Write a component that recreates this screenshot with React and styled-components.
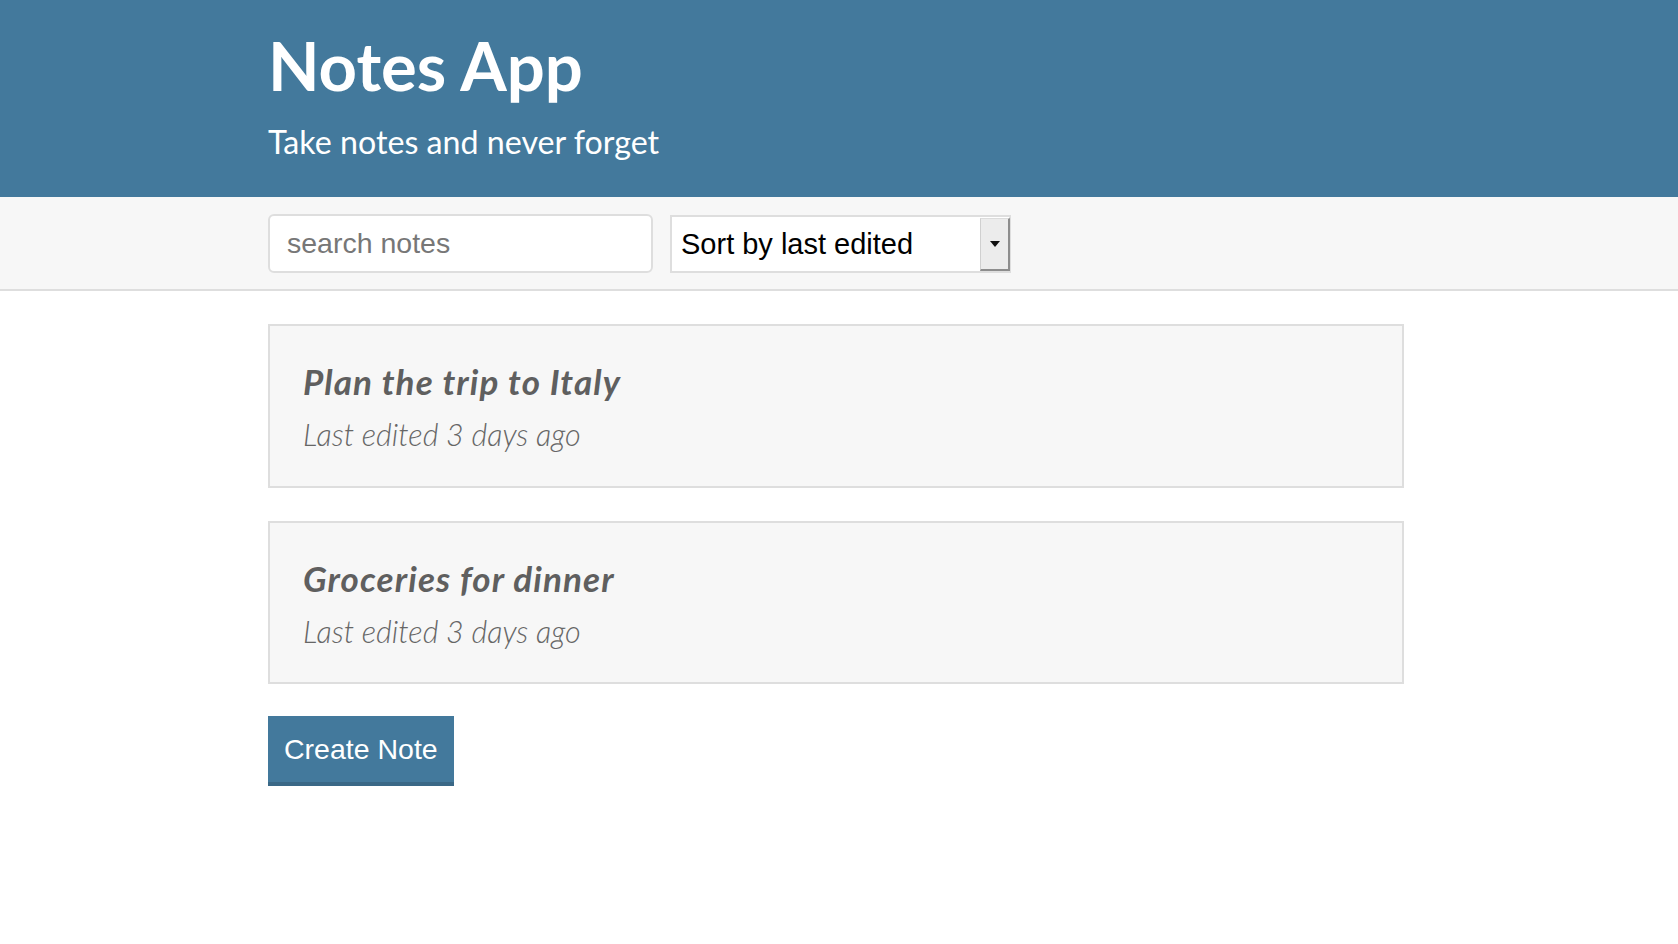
import React from 'react';
import styled, { createGlobalStyle } from 'styled-components';

const GlobalStyle = createGlobalStyle`
  * {
    box-sizing: border-box;
  }
  body {
    margin: 0;
    background: #fff;
    font-family: Lato, "Open Sans", sans-serif;
    color: #333;
  }
`;

const Container = styled.div`
  max-width: 1142px;
  margin: 0 auto;
  padding-right: 6px;
`;

const Header = styled.header`
  background: #43799c;
  color: #fff;
  padding: 32px 0 39px;
`;

const Title = styled.h1`
  margin: 0;
  font-size: 67px;
  line-height: 1;
  font-weight: 700;
`;

const Subtitle = styled.h2`
  margin: 27px 0 0;
  font-size: 32.2px;
  line-height: 1;
  font-weight: 400;
`;

const ActionsBar = styled.div`
  background: #f7f7f7;
  border-bottom: 2px solid #dedede;
  padding: 17px 0 16px;
`;

const Filters = styled.div`
  display: flex;
  gap: 17px;
  align-items: center;
`;

const SearchInput = styled.input`
  width: 385px;
  height: 59px;
  border: 2px solid #dedede;
  border-radius: 6px;
  padding: 0 17px;
  font-family: "Liberation Sans", Arial, sans-serif;
  font-size: 28.5px;
  color: #333;
  background: #fff;
  outline: none;
  &::placeholder {
    color: #777;
  }
`;

const SelectWrap = styled.div`
  position: relative;
  width: 341px;
  height: 58px;
`;

const Select = styled.select`
  appearance: none;
  width: 100%;
  height: 100%;
  border: 2px solid #dedede;
  border-radius: 0;
  background: #fff;
  padding: 0 40px 0 9px;
  font-family: "Liberation Sans", Arial, sans-serif;
  font-size: 29px;
  color: #000;
  outline: none;
`;

const ArrowBox = styled.span`
  position: absolute;
  top: 3px;
  right: 1px;
  width: 30px;
  bottom: 2px;
  background: #ececec;
  border-top: 1px solid #dcdcdc;
  border-left: 1px solid #d0d0d0;
  border-right: 2px solid #8d8d8d;
  border-bottom: 2px solid #8d8d8d;
  pointer-events: none;
  display: flex;
  align-items: center;
  justify-content: center;
  &::after {
    content: "";
    border-left: 5px solid transparent;
    border-right: 5px solid transparent;
    border-top: 6px solid #111;
  }
`;

const Main = styled.main`
  padding-top: 33px;
`;

const NoteList = styled.div`
  display: flex;
  flex-direction: column;
  gap: 33px;
`;

const NoteCard = styled.a`
  display: block;
  background: #f7f7f7;
  border: 2px solid #dedede;
  padding: 34px 33px 33px;
  text-decoration: none;
  cursor: pointer;
`;

const NoteTitle = styled.p`
  margin: 0 0 14px;
  font-size: 35px;
  line-height: 1.2;
  font-weight: 700;
  font-style: italic;
  letter-spacing: 1.1px;
  color: #5f5f5f;
`;

const NoteMeta = styled.p`
  margin: 0;
  font-size: 30.5px;
  line-height: 1.2;
  font-weight: 300;
  font-style: italic;
  color: #666;
`;

const Button = styled.button`
  display: block;
  margin-top: 32px;
  height: 70px;
  padding: 0 16px;
  background: #43799c;
  color: #fff;
  border: none;
  border-bottom: 4px solid #3a6886;
  font-family: "Liberation Sans", Arial, sans-serif;
  font-size: 28.5px;
  line-height: 66px;
  cursor: pointer;
`;

const notes = [
  { id: 1, title: 'Plan the trip to Italy', edited: 'Last edited 3 days ago' },
  { id: 2, title: 'Groceries for dinner', edited: 'Last edited 3 days ago' },
];

export default function App() {
  return (
    <>
      <GlobalStyle />
      <Header>
        <Container>
          <Title>Notes App</Title>
          <Subtitle>Take notes and never forget</Subtitle>
        </Container>
      </Header>
      <ActionsBar>
        <Container>
          <Filters>
            <SearchInput type="text" placeholder="search notes" />
            <SelectWrap>
              <Select defaultValue="byEdited">
                <option value="byEdited">Sort by last edited</option>
                <option value="byCreated">Sort by recently created</option>
                <option value="alphabetical">Sort alphabetically</option>
              </Select>
              <ArrowBox />
            </SelectWrap>
          </Filters>
        </Container>
      </ActionsBar>
      <Main>
        <Container>
          <NoteList>
            {notes.map((note) => (
              <NoteCard key={note.id}>
                <NoteTitle>{note.title}</NoteTitle>
                <NoteMeta>{note.edited}</NoteMeta>
              </NoteCard>
            ))}
          </NoteList>
          <Button>Create Note</Button>
        </Container>
      </Main>
    </>
  );
}
